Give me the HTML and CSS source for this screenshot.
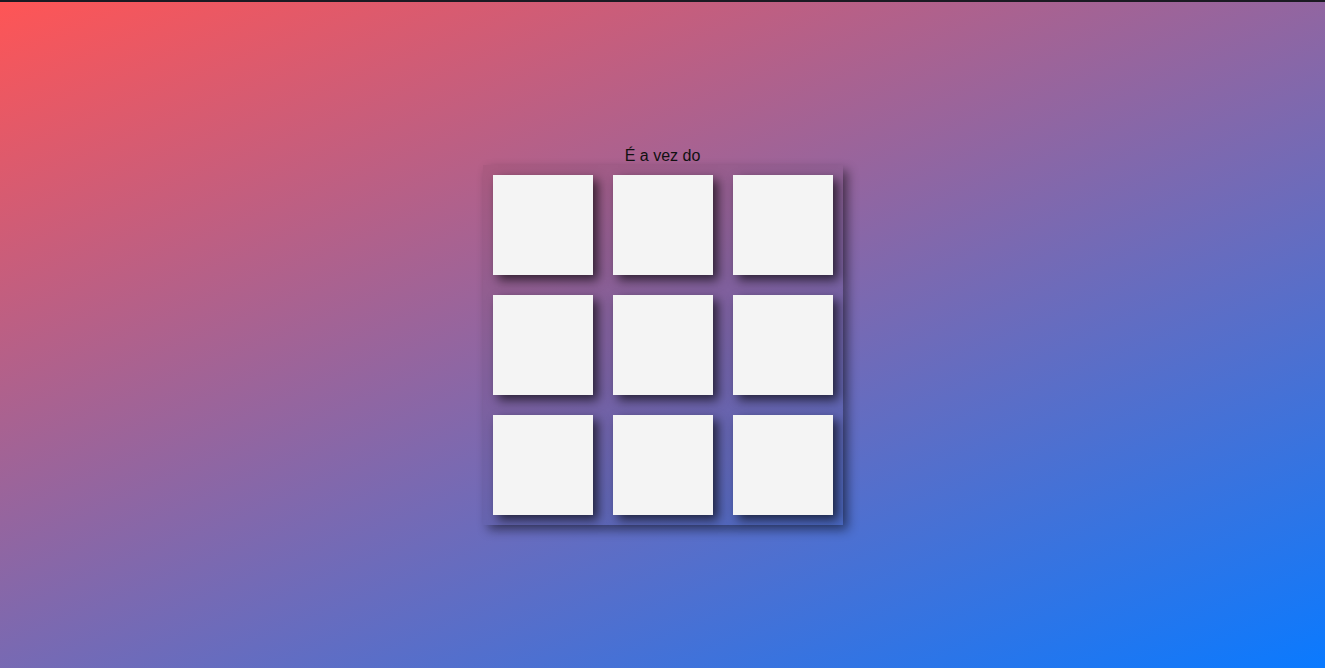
FILE: index.html
```html
<!DOCTYPE html>
<html lang="pt">
<head>
<meta charset="utf-8">
<title>Jogo da Velha</title>
<link rel="stylesheet" href="styles.css">
</head>
<body>
  <main class="game">
    <p class="turn">É a vez do <span class="player"></span></p>
    <div class="board">
      <div class="cell"></div>
      <div class="cell"></div>
      <div class="cell"></div>
      <div class="cell"></div>
      <div class="cell"></div>
      <div class="cell"></div>
      <div class="cell"></div>
      <div class="cell"></div>
      <div class="cell"></div>
    </div>
  </main>
</body>
</html>
```

FILE: styles.css
```css
html, body {
  margin: 0;
  padding: 0;
  height: 100%;
}

body {
  box-sizing: border-box;
  border-top: 2px solid #1b1a22;
  padding-top: 2px;
  background: linear-gradient(158deg, #ff5555, #0a7aff);
  font-family: "Liberation Sans", Arial, sans-serif;
  font-size: 16px;
  color: #111;
  display: flex;
  align-items: center;
  justify-content: center;
}

.game {
  display: flex;
  flex-direction: column;
  align-items: center;
}

.turn {
  margin: 0;
  line-height: normal;
}

.board {
  display: grid;
  grid-template-columns: repeat(3, 100px);
  grid-template-rows: repeat(3, 100px);
  gap: 20px;
  padding: 10px;
  background: rgba(0, 0, 0, 0.06);
  box-shadow: 5px 5px 10px rgba(0, 0, 0, 0.45);
}

.cell {
  background: #f4f4f4;
  box-shadow: 5px 5px 10px rgba(0, 0, 0, 0.65);
}
```
